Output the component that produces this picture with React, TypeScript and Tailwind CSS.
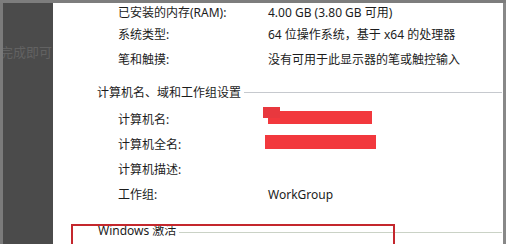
import React from "react";

const font = { fontFamily: '"Noto Sans", "Noto Sans CJK SC", sans-serif' };

function Row({ label, value, children }: { label: string; value?: string; children?: React.ReactNode }) {
  return (
    <div className="flex h-[25px] items-center pl-[65px]">
      <div className="w-[150px] shrink-0">{label}</div>
      <div className="relative h-full flex-1 flex items-center">
        {value}
        {children}
      </div>
    </div>
  );
}

export default function App() {
  return (
    <div
      className="relative flex h-[244px] w-[506px] flex-col overflow-hidden bg-white text-[12px] text-[#1c1c1c]"
      style={font}
    >
      <div className="h-[3px] shrink-0 bg-[#7d7d7d]" />
      <div className="flex flex-1">
        <div className="w-[3px] shrink-0 bg-[#7b7b7b]" />
        <div className="relative w-[50px] shrink-0 overflow-hidden bg-[#4b4b4b]">
          <div className="absolute left-[-3px] top-[40px] whitespace-nowrap text-[13px] leading-[18px] text-[#626262]">
            完成即可
          </div>
        </div>
        <div className="flex flex-1 flex-col">
          <div className="flex h-[19px] items-center pl-[65px]">
            <div className="w-[150px] shrink-0">已安装的内存(RAM):</div>
            <div>4.00 GB (3.80 GB 可用)</div>
          </div>
          <Row label="系统类型:" value="64 位操作系统，基于 x64 的处理器" />
          <Row label="笔和触摸:" value="没有可用于此显示器的笔或触控输入" />
          <div className="mt-[8px] flex h-[25px] items-center pl-[44px]">
            <div className="shrink-0">计算机名、域和工作组设置</div>
            <div className="ml-[3px] mr-px h-px flex-1 bg-[#c6c9ce]" />
          </div>
          <div className="mt-[2px]">
            <Row label="计算机名:">
              <div className="absolute left-0 top-[4px] h-[13px] w-[104px] bg-[#f2383d]" />
              <div className="absolute left-[-5px] top-0 h-[11px] w-[17px] bg-[#e8383e]" />
            </Row>
            <Row label="计算机全名:">
              <div className="absolute left-[-3px] top-[3px] h-[14px] w-[111px] bg-[#f2383d]" />
            </Row>
            <Row label="计算机描述:" />
            <Row label="工作组:" value="WorkGroup" />
          </div>
          <div className="mt-[11px] flex h-[25px] items-center pl-[45px]">
            <div className="shrink-0">Windows 激活</div>
            <div className="ml-[3px] mr-px mt-[3px] h-px flex-1 bg-[#cad2c6]" />
          </div>
        </div>
        <div className="w-[3px] shrink-0 bg-[#888888]" />
      </div>
      <div className="absolute left-[71px] top-[224px] h-[40px] w-[324px] border-2 border-[#c4272d]" />
    </div>
  );
}
